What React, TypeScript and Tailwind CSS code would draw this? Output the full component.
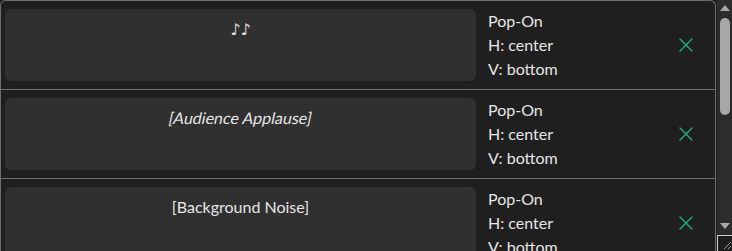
import React from 'react';

type Cue = {
  text: string;
  italic?: boolean;
};

const cues: Cue[] = [
  { text: '♪♪' },
  { text: '[Audience Applause]', italic: true },
  { text: '[Background Noise]' },
];

function CloseIcon() {
  return (
    <svg width="14" height="14" viewBox="0 0 14 14" fill="none" aria-hidden>
      <path d="M1 1L13 13M13 1L1 13" stroke="#22b07d" strokeWidth="1.4" strokeLinecap="round" />
    </svg>
  );
}

function CueRow({ cue }: { cue: Cue }) {
  return (
    <div className="flex border-b border-[#6e6e6e] pb-2 pl-1 pt-2">
      <div className="h-[72px] w-[471px] shrink-0 rounded-md bg-[#303030] pt-2 text-center">
        <span
          className={
            cue.italic
              ? 'inline-block -skew-x-12 text-base leading-6 text-[#e6e6e6]'
              : 'text-base leading-6 text-[#e6e6e6]'
          }
        >
          {cue.text}
        </span>
      </div>
      <div className="ml-3 flex w-[180px] flex-col text-base leading-6 text-[#e6e6e6]">
        <span>Pop-On</span>
        <span>H: center</span>
        <span>V: bottom</span>
      </div>
      <div className="flex items-center pl-[6px]">
        <button type="button" aria-label="Remove cue" className="flex h-6 w-6 items-center justify-center">
          <CloseIcon />
        </button>
      </div>
    </div>
  );
}

function Scrollbar() {
  return (
    <div className="flex h-full w-4 shrink-0 flex-col bg-[#1f1f1f] pl-px">
      <div className="flex flex-1 flex-col items-center bg-[#2c2c2c]">
        <div className="mt-[5px] h-0 w-0 border-x-[5px] border-b-[6px] border-x-transparent border-b-[#a8a8a8]" />
        <div className="mt-[7px] h-[97px] w-[10px] rounded-[5px] bg-[#a8a8a8]" />
        <div className="flex-1" />
        <div className="mb-[6px] h-0 w-0 border-x-[5px] border-t-[6px] border-x-transparent border-t-[#a8a8a8]" />
      </div>
      <div className="h-4 border-l border-t border-[#cfcfcf] bg-[#1f1f1f]">
        <svg width="15" height="15" viewBox="0 0 15 15" aria-hidden>
          <path d="M13 6L6 13M13 10L10 13" stroke="#9a9a9a" strokeWidth="1" />
        </svg>
      </div>
    </div>
  );
}

export default function App() {
  return (
    <div
      className="flex h-[251px] w-[732px] overflow-hidden bg-[#1f1f1f]"
      style={{ fontFamily: 'Lato, "DejaVu Sans", sans-serif' }}
    >
      <div className="h-full w-[716px] overflow-hidden">
        <div className="rounded-t-md border-x border-t border-[#6e6e6e]">
          {cues.map((cue) => (
            <CueRow key={cue.text} cue={cue} />
          ))}
        </div>
      </div>
      <Scrollbar />
    </div>
  );
}
